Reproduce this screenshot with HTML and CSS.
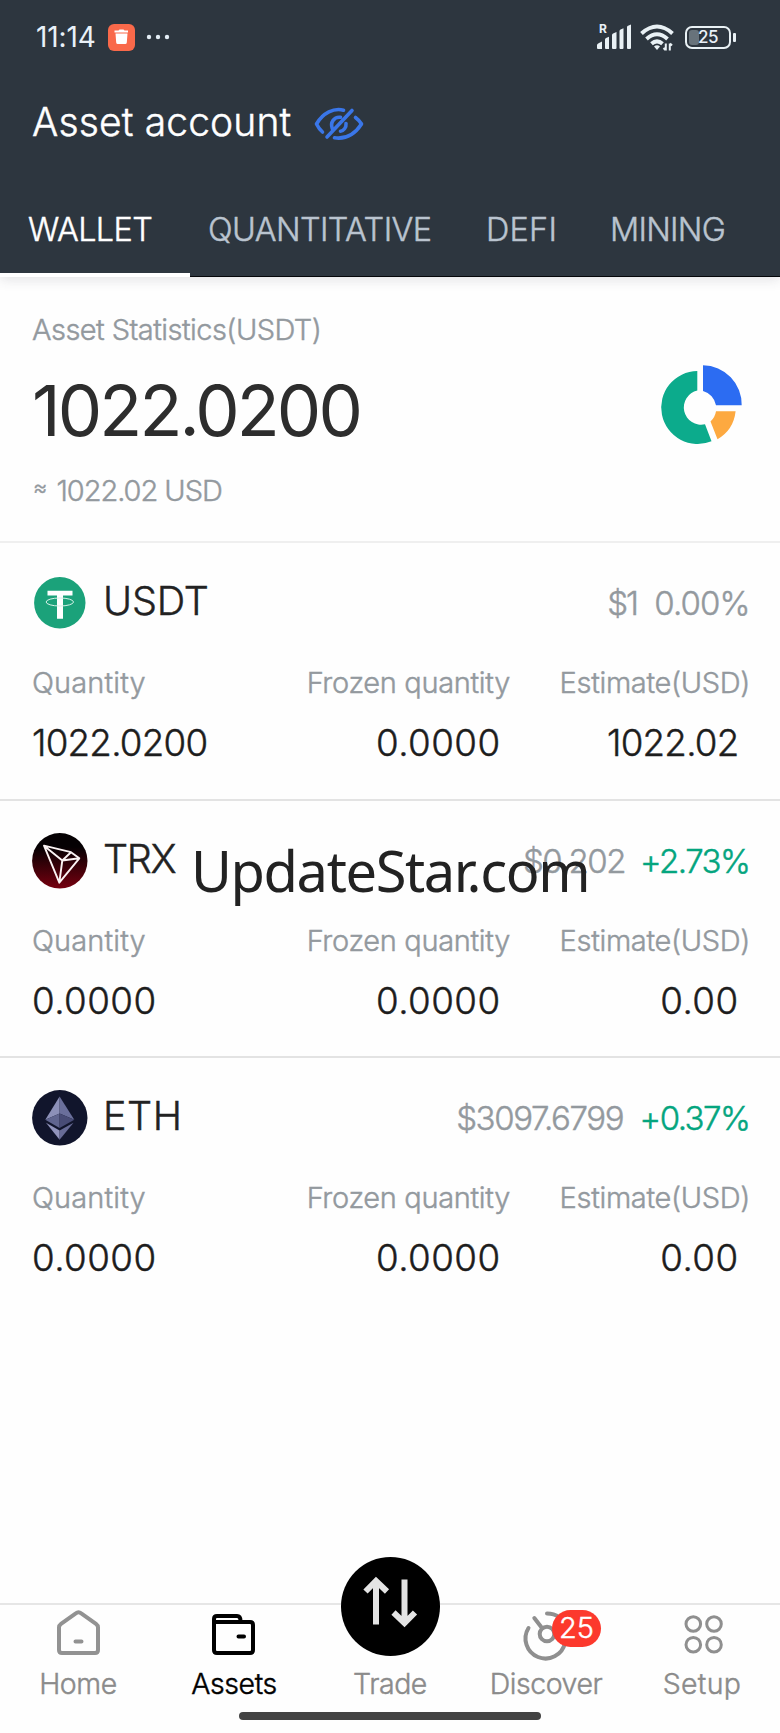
FILE: index.html
```html
<!DOCTYPE html>
<html lang="en">
<head>
<meta charset="utf-8">
<title>Asset account</title>
<link rel="stylesheet" href="styles.css">
</head>
<body>
<div class="screen">
  <header class="header">
    <div class="status">
      <span class="clock">11:14</span>
      <svg class="app-badge" width="27" height="27" viewBox="0 0 27 27"><rect width="27" height="27" rx="6" fill="#f9694a"/><path d="M6.500 6.500h4l1-1h4l1 1h3.500v2h-13.500zM7.500 9.500h12l-.7 9q-.1 1.500-1.600 1.500h-7.400q-1.500 0-1.600-1.500z" fill="#fff"/></svg>
      <svg class="dots" width="24" height="6" viewBox="0 0 24 6" fill="#e3edf5"><circle cx="3" cy="3" r="2.200"/><circle cx="12" cy="3" r="2.200"/><circle cx="21" cy="3" r="2.200"/></svg>
      <div class="status-right">
        <div class="signal">
          <span class="roaming">R</span>
          <svg width="36" height="26" viewBox="0 0 36 26" fill="#e9f1f5"><path d="M1 24v-3q0-1 2-2l3-1.500v7.500h-4q-1 0-1-1zM9 15.500q0-1 1-1.500l3-1.200v12.200h-3q-1 0-1-1zM16 11q0-1 1-1.500l3.500-1.500v16q0 1-1 1h-2.500q-1 0-1-1zM23.500 7q0-1 1-1.500l3-1.200v19.700q0 1-1 1h-2q-1 0-1-1zM31 3.200q0-1 1-1.400l3-1.300v23.500q0 1-1 1h-2q-1 0-1-1z"/></svg>
        </div>
        <svg class="wifi" width="36" height="27" viewBox="0 0 36 27" fill="none" stroke="#e9f1f5" stroke-width="4"><path d="M1.500 9.500Q17 -4.500 32.500 9.500M6.500 15Q17 5.500 27.500 15M11.500 19.800Q17 15 22.500 19.800"/><path d="M14 22.500q3-2.500 6 0l-3 3.500z" fill="#e9f1f5" stroke="none"/><path d="M25.800 19.500v7M29.800 26.500v-7M23.500 24l2 2M32 21.500l-2-2" stroke-width="2"/></svg>
        <div class="battery"><span class="battery-level"></span><span class="battery-text">25</span></div>
      </div>
    </div>
    <div class="title-row">
      <h1 class="title">Asset account</h1>
      <svg class="eye" width="50" height="36" viewBox="0 0 50 36" fill="none" stroke="#3a76e8" stroke-width="3.600" stroke-linecap="round" stroke-linejoin="round"><path d="M29.500 4.200C20 1.500 9 7 2.500 18Q5 23 8.500 26M41.500 11.500Q45.500 14.500 47.500 18C41 28 32 33.500 20.500 31.800M38 4.500L13 31"/><path d="M26.500 11.300C20 10.500 16 16.500 18.300 22.500M32 17.500C32.500 21.500 29.500 25 26.500 25.200"/></svg>
    </div>
    <nav class="tabs">
      <a class="tab active">WALLET</a>
      <a class="tab quant">QUANTITATIVE</a>
      <a class="tab defi">DEFI</a>
      <a class="tab mining">MINING</a>
    </nav>
  </header>

  <section class="stats">
    <div class="stats-text">
      <div class="stats-label">Asset Statistics(USDT)</div>
      <div class="stats-total">1022.0200</div>
      <div class="stats-usd"><span class="approx">≈</span><span>1022.02 USD</span></div>
    </div>
    <svg class="donut" width="82" height="80" viewBox="0 0 82 80"><path d="M36.300 7A36.500 36.500 0 1 0 50.500 77.300L44 60.300A17.300 17.300 0 1 1 36.300 26.500Z" fill="#0cab8c"/><path d="M42 1.300A39 39 0 0 1 80.700 41.300H55A18 18 0 0 0 42 27Z" fill="#2c6cf2"/><path d="M55 47.300H74.600A37 37 0 0 1 56.500 75.300L49.500 57.500Q54 53.500 55 47.300Z" fill="#fda940"/></svg>
  </section>

  <main class="assets">
    <section class="asset usdt">
      <div class="asset-head">
        <svg width="56" height="56" viewBox="0 0 56 56"><circle cx="27.800" cy="27.800" r="25.700" fill="#1ba27a"/><path d="M15.500 15.700H40.500V20.400H31V43.700H25V20.400H15.500Z" fill="#fff"/><ellipse cx="27.800" cy="27" rx="13.700" ry="4" fill="none" stroke="#d8f2e9" stroke-width="1"/></svg>
        <h2 class="name">USDT</h2>
        <span class="price">$1</span><span class="change">0.00%</span>
      </div>
      <div class="labels"><span class="quantity">Quantity</span><span>Frozen quantity</span><span>Estimate(USD)</span></div>
      <div class="values"><span>1022.0200</span><span class="zero">0.0000</span><span>1022.02</span></div>
    </section>
    <section class="asset trx">
      <div class="asset-head">
        <svg width="56" height="56" viewBox="0 0 56 56"><defs><linearGradient id="trx" x1="0" y1="0" x2="0" y2="1"><stop offset=".25" stop-color="#050103"/><stop offset="1" stop-color="#76000f"/></linearGradient></defs><circle cx="27.800" cy="27.800" r="27.700" fill="url(#trx)"/><path d="M12 12.700L39 19.200L47.300 25.300L27.300 49.700ZM12 12.700L30.300 27.500L27.300 49.700M39 19.200L30.300 27.500L47.300 25.300" fill="none" stroke="#fbf3f3" stroke-width="1.900" stroke-linejoin="round"/></svg>
        <h2 class="name">TRX</h2>
        <span class="price">$0.202</span><span class="change up">+2.73%</span>
      </div>
      <div class="labels"><span class="quantity">Quantity</span><span>Frozen quantity</span><span>Estimate(USD)</span></div>
      <div class="values"><span class="zero">0.0000</span><span class="zero">0.0000</span><span class="zero">0.00</span></div>
      <div class="watermark">UpdateStar.com</div>
    </section>
    <section class="asset eth">
      <div class="asset-head">
        <svg width="56" height="56" viewBox="0 0 56 56"><circle cx="27.800" cy="27.800" r="27.700" fill="#11152c"/><path d="M27.600 6.400L13.300 29.700L27.600 23.500Z" fill="#8c90b8"/><path d="M27.600 6.400L42.300 29.700L27.600 23.500Z" fill="#6a6f9b"/><path d="M13.300 29.700L27.600 23.500V38Z" fill="#60658f"/><path d="M42.300 29.700L27.600 23.500V38Z" fill="#484c76"/><path d="M14 32.700L27.600 40.500V49.700Z" fill="#9093bb"/><path d="M41.500 32.700L27.600 40.500V49.700Z" fill="#676b96"/></svg>
        <h2 class="name">ETH</h2>
        <span class="price">$3097.6799</span><span class="change up">+0.37%</span>
      </div>
      <div class="labels"><span class="quantity">Quantity</span><span>Frozen quantity</span><span>Estimate(USD)</span></div>
      <div class="values"><span class="zero">0.0000</span><span class="zero">0.0000</span><span class="zero">0.00</span></div>
    </section>
  </main>

  <nav class="bottom-nav">
    <a class="item"><svg class="icon" width="50" height="50" viewBox="0 0 50 50" fill="none" stroke="#929292" stroke-width="4" stroke-linecap="round" stroke-linejoin="round"><path d="M22.800 6.300Q25.500 4.200 28.200 6.300L43 16.800Q45 18.200 45 20.500V43Q45 46 42 46H9Q6 46 6 43V20.500Q6 18.200 8 16.800ZM22.500 34.500H28.500"/></svg><span class="item-label">Home</span></a>
    <a class="item current"><svg class="icon" width="50" height="50" viewBox="0 0 50 50" fill="none" stroke="#000" stroke-width="4" stroke-linecap="round" stroke-linejoin="round"><path d="M5 15H41Q44 15 44 18V43Q44 46 41 46H8Q5 46 5 43V12Q5 9 8 9H28Q31.500 9 31.500 14M29.500 29.500H35"/></svg><span class="item-label">Assets</span></a>
    <a class="item"><svg class="trade" width="99" height="99" viewBox="0 0 99 99"><circle cx="49.500" cy="49.500" r="49.500"/><path d="M35 67.500V24M24.500 34.500L35 24L46 34.500M63.500 22.500V66M52.500 55.500L63.500 66L74 55.500" fill="none" stroke="#e4e4e4" stroke-width="6"/></svg><span class="item-label">Trade</span></a>
    <a class="item"><svg class="icon" width="50" height="50" viewBox="0 0 50 50" fill="none" stroke="#8f8f8f" stroke-width="4" stroke-linecap="round"><circle cx="26" cy="27" r="7.300"/><path d="M13.300 11L21 21M7.500 21A20 20 0 1 0 44 36M26 6.500Q33 6.500 38 10"/></svg><span class="badge">25</span><span class="item-label">Discover</span></a>
    <a class="item"><svg class="icon" width="50" height="50" viewBox="0 0 50 50" fill="none" stroke="#8f8f8f" stroke-width="3"><circle cx="16.300" cy="17" r="7.300"/><circle cx="37" cy="17" r="7.300"/><circle cx="16.300" cy="37.700" r="7.300"/><circle cx="37" cy="37.700" r="7.300"/></svg><span class="item-label setup">Setup</span></a>
    <span class="gesture-bar"></span>
  </nav>
</div>
</body>
</html>
```
FILE: styles.css
```css
* { box-sizing: border-box; }
body { margin: 0; font-family: Inter, "Noto Sans", sans-serif; font-weight: 300; -webkit-text-stroke: .45px currentColor; background: #fefefe; color: #222; }
h1, h2 { margin: 0; font-weight: inherit; }
svg { display: block; flex: none; overflow: visible; }
.screen { width: 780px; height: 1733px; display: flex; flex-direction: column; background: #fefefe; overflow: hidden; }

/* Header */
.header { height: 277px; flex: none; background: #2d363f; border-bottom: 1px solid #05070a; box-shadow: 0 2px 12px rgba(60, 60, 80, .16); position: relative; z-index: 1; }
.status { height: 74px; padding-left: 36px; display: flex; align-items: center; color: #e9f1f8; -webkit-text-stroke: 0; }
.clock { font-size: 28px; font-weight: 400; letter-spacing: -.1px; width: 72px; }
.dots { margin-left: 11px; }
.status-right { margin-left: auto; display: flex; align-items: center; padding-right: 44px; }
.signal { position: relative; margin-right: 8px; }
.roaming { position: absolute; left: 3px; top: -2px; font-size: 12px; line-height: 13px; font-weight: 700; }
.wifi { margin-right: 9px; }
.battery { width: 46px; height: 23px; border: 2px solid #e9f1f5; border-radius: 7px; position: relative; display: flex; align-items: center; justify-content: center; margin-right: 5px; }
.battery::after { content: ""; position: absolute; right: -7px; top: 5px; width: 3px; height: 9px; border-radius: 1px; background: #e9f1f5; }
.battery-level { position: absolute; left: 2px; top: 2px; width: 10px; height: 15px; border-radius: 3px; background: #68737b; }
.battery-text { position: relative; font-size: 17px; font-weight: 500; letter-spacing: -.4px; }
.title-row { height: 96px; padding-left: 32px; display: flex; align-items: center; }
.title { font-size: 39px; letter-spacing: .15px; color: #fff; width: 282px; padding-bottom: 2px; white-space: nowrap; }
.eye { margin-top: 3px; }
.tabs { height: 107px; display: flex; color: #bac4cf; font-size: 32.400px; line-height: 119px; letter-spacing: -.57px; }
.tab { height: 106px; white-space: nowrap; }
.active { height: 107px; color: #fff; width: 190px; border-bottom: 4px solid #fff; padding-left: 28px; }
.quant { margin-left: 18px; width: 278px; }
.defi { width: 124px; letter-spacing: .27px; }
.mining { letter-spacing: -.72px; }

/* Portfolio total */
.stats { height: 266px; flex: none; border-bottom: 2px solid #efefef; padding: 30px 37px 0 32px; display: flex; justify-content: space-between; color: #93999e; font-size: 29px; }
.stats-label { height: 46px; line-height: 46px; letter-spacing: -.550px; }
.stats-total { height: 116px; line-height: 116px; font-size: 70.500px; font-weight: 400; letter-spacing: -2.900px; color: #2d2d2d; -webkit-text-stroke: 0; }
.stats-usd { height: 43px; line-height: 43px; letter-spacing: -1.050px; display: flex; }
.approx { font-size: 22px; line-height: 36px; width: 24.500px; padding-left: 1px; }
.donut { margin-top: 57px; }

/* Asset list */
.assets { flex: 1; }
.asset { height: 257.500px; padding: 20px 32px 0; border-bottom: 2px solid #e3e3e3; position: relative; }
.asset:last-child { border: 0; }
.asset-head { height: 80px; display: flex; align-items: center; color: #93999e; font-size: 33px; margin-right: -1.500px; }
.name { font-size: 39.500px; margin-left: 15px; padding-bottom: 4px; color: #222; flex: 1; }
.usdt .name { letter-spacing: -.14px; }
.trx .name { letter-spacing: -1.300px; }
.eth .name { letter-spacing: .580px; }
.price { letter-spacing: -1.400px; }
.change { letter-spacing: -1.500px; }
.usdt .price { margin-right: 17.400px; letter-spacing: -2.100px; }
.usdt .change { letter-spacing: -.890px; }
.trx .price { margin-right: 15px; }
.eth .price { margin-right: 16.500px; }
.up { color: #04a57e; }
.labels, .values { display: grid; grid-template-columns: 238px 240px 238px; }
.labels { height: 80px; line-height: 80px; font-size: 29px; color: #93999e; letter-spacing: -.34px; }
.labels .quantity { letter-spacing: .11px; }
.labels span + span, .values span + span { text-align: right; }
.labels span:last-child { margin-right: -2px; }
.values { height: 40px; line-height: 40px; font-size: 36.700px; color: #1d1d1d; letter-spacing: -.750px; }
.values span + span { padding-right: 9.500px; }
.values .zero { letter-spacing: .450px; }
.watermark { position: absolute; left: 191px; top: 29px; font: 400 56px/80px "Noto Sans", "Open Sans", sans-serif; letter-spacing: -1.400px; color: #222; -webkit-text-stroke: 0; }

/* Bottom navigation */
.bottom-nav { position: relative; height: 130px; flex: none; border-top: 2px solid #e6e6e6; display: grid; grid-template-columns: repeat(5, 156px); color: #8b8b8b; font-size: 28.500px; }
.item { position: relative; display: flex; flex-direction: column; align-items: center; }
.icon { margin-top: 2px; height: 50px; }
.item-label { line-height: 53px; letter-spacing: -.450px; }
.setup { letter-spacing: .33px; }
.current { color: #000; }
.trade { margin: -48px 0 1px; }
.badge { position: absolute; left: 84px; top: 5px; width: 49px; height: 37px; border-radius: 19px; background: #fc392d; color: #fff; font-size: 29px; line-height: 36px; text-align: center; }
.gesture-bar { position: absolute; left: 239px; top: 107px; width: 302px; height: 8px; border-radius: 4px; background: #434343; }
```
